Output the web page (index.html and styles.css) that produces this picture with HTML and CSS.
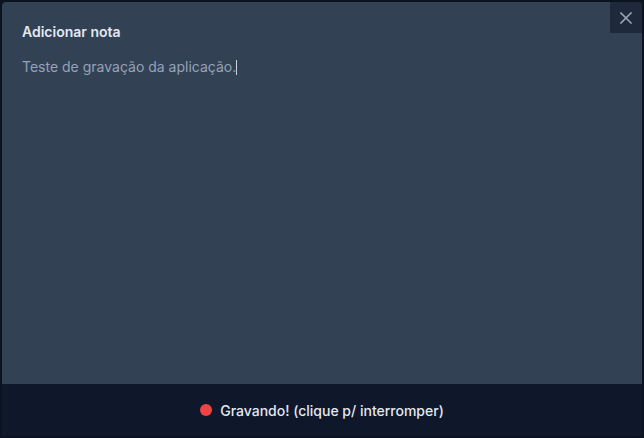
FILE: index.html
```html
<!DOCTYPE html>
<html lang="pt-BR">
<head>
<meta charset="utf-8">
<link rel="stylesheet" href="styles.css">
</head>
<body>
<div class="modal">
  <button class="close" aria-label="Fechar">
    <svg width="12" height="12" viewBox="0 0 12 12"><path d="M1 1L11 11M11 1L1 11" stroke="#94a3b8" stroke-width="1.6" stroke-linecap="square"/></svg>
  </button>
  <div class="body">
    <div class="title">Adicionar nota</div>
    <div class="note">Teste de gravação da aplicação.<span class="caret"></span></div>
  </div>
  <div class="footer">
    <span class="dot"></span>
    <span class="status">Gravando! (clique p/ interromper)</span>
  </div>
</div>
</body>
</html>
```
FILE: styles.css
```css
html, body {
  margin: 0;
  padding: 0;
  background: #0b1220;
}
body {
  padding: 2px;
  font-family: Inter, "Noto Sans", sans-serif;
}
.modal {
  position: relative;
  width: 640px;
  height: 434px;
  background: #334155;
  border-radius: 4px;
  overflow: hidden;
  display: flex;
  flex-direction: column;
}
.close {
  position: absolute;
  top: 0;
  right: 0;
  width: 32px;
  height: 31px;
  border: 0;
  padding: 0;
  background: #1e293b;
  display: flex;
  align-items: center;
  justify-content: center;
}
.body {
  flex: 1;
  padding: 20px 20px;
}
.title {
  color: #e2e8f0;
  font-size: 14px;
  font-weight: 600;
  line-height: 20px;
}
.note {
  margin-top: 15px;
  color: #94a3b8;
  font-size: 14px;
  line-height: 20px;
}
.caret {
  display: inline-block;
  width: 1px;
  height: 15px;
  background: #cbd5e1;
  vertical-align: -3px;
}
.footer {
  height: 52px;
  background: #0f172a;
  display: flex;
  align-items: center;
  justify-content: center;
  gap: 8px;
}
.dot {
  width: 12px;
  height: 12px;
  border-radius: 50%;
  background: #ef4444;
}
.status {
  color: #e2e8f0;
  font-size: 14px;
  font-weight: 500;
}
```
